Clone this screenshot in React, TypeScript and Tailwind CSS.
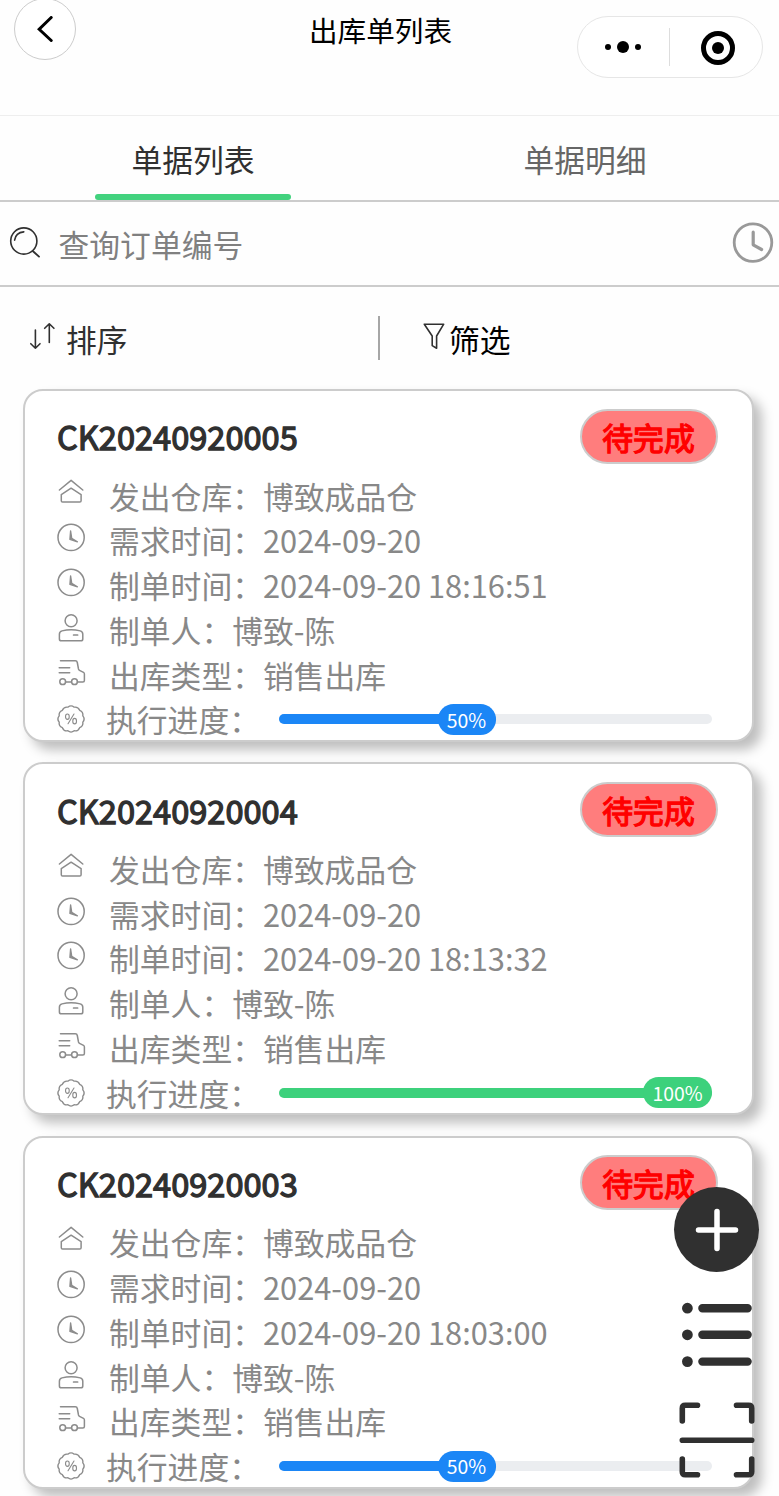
import type { ReactNode } from "react";

type Order = {
  code: string;
  status: string;
  warehouse: string;
  needDate: string;
  createdAt: string;
  creator: string;
  type: string;
  progress: number;
};

const orders: Order[] = [
  { code: "CK20240920005", status: "待完成", warehouse: "博致成品仓", needDate: "2024-09-20", createdAt: "2024-09-20 18:16:51", creator: "博致-陈", type: "销售出库", progress: 50 },
  { code: "CK20240920004", status: "待完成", warehouse: "博致成品仓", needDate: "2024-09-20", createdAt: "2024-09-20 18:13:32", creator: "博致-陈", type: "销售出库", progress: 100 },
  { code: "CK20240920003", status: "待完成", warehouse: "博致成品仓", needDate: "2024-09-20", createdAt: "2024-09-20 18:03:00", creator: "博致-陈", type: "销售出库", progress: 50 },
];

function RowIcon({ children }: { children: ReactNode }) {
  return (
    <svg viewBox="0 0 28 28" className="mb-[2px] h-7 w-7 shrink-0 overflow-visible" fill="none" stroke="#8c8c8c" strokeWidth="1.5" strokeLinecap="round" strokeLinejoin="round">
      {children}
    </svg>
  );
}

function HouseIcon() {
  return (
    <RowIcon>
      <path d="M2.4 11 14.1 1.3 25.8 11" />
      <path d="M4.3 15.6 14.1 9.2l10 6.4v6.2q0 1.3-1.3 1.3H5.6q-1.3 0-1.3-1.3z" />
    </RowIcon>
  );
}

function ClockIcon() {
  return (
    <RowIcon>
      <circle cx="14.1" cy="13.4" r="13.1" />
      <path d="M13.600 6.900 12.900 15.300 20.400 17.800 14.700 14.200z" fill="#8c8c8c" strokeWidth="1.300" />
    </RowIcon>
  );
}

function UserIcon() {
  return (
    <RowIcon>
      <circle cx="14.1" cy="6.7" r="6" />
      <path d="M2.4 20.2q0-2.6 2.6-3.3Q9.4 15.7 14.1 15.7t9.1 1.2q2.6 .7 2.6 3.3v4.7q0 1.9-1.9 1.9H4.3q-1.9 0-1.9-1.9z" />
      <path d="M16.6 21h4" strokeWidth="1.7" />
    </RowIcon>
  );
}

function TruckIcon() {
  return (
    <RowIcon>
      <path d="M3.5 1.800h14.800q1.700 0 2 1.700l1.200 6.500q.2 .9 1 1.300l4 2.100q.9 .5 .9 1.500v6.500q0 1.500-1.500 1.500h-5.600" />
      <path d="M2.200 8.800h10.500M2.200 13.700h10.500M8.500 22.900h5.800" />
      <circle cx="5.700" cy="22.700" r="2.900" />
      <circle cx="17.500" cy="22.700" r="2.900" />
    </RowIcon>
  );
}

function PercentIcon() {
  return (
    <RowIcon>
      <g transform="translate(.9 1.200) scale(.93)">
        <path d="M10.700 3.200q3.400-2.800 6.800 0 4.300-.7 5.900 3.400 4.100 1.600 3.400 5.900 2.800 3.400 0 6.800.7 4.300-3.400 5.900-1.600 4.100-5.900 3.400-3.400 2.800-6.800 0-4.300.7-5.900-3.400-4.100-1.600-3.400-5.900-2.800-3.400 0-6.800-.7-4.300 3.400-5.900 1.600-4.100 5.900-3.400z" />
        <ellipse cx="10.200" cy="13.400" rx="2" ry="2.900" strokeWidth="1.200" />
        <ellipse cx="18" cy="18.200" rx="2" ry="2.900" strokeWidth="1.200" />
        <path d="M17.300 10.600 10.900 21" strokeWidth="1.200" />
      </g>
    </RowIcon>
  );
}

function InfoRow({ icon, label, value }: { icon: ReactNode; label: string; value: string }) {
  return (
    <div className="flex h-[44.8px] items-center">
      {icon}
      <span className="ml-[24px] pt-[3px] whitespace-pre">{label}：{value}</span>
    </div>
  );
}

function Progress({ value }: { value: number }) {
  const done = value >= 100;
  return (
    <div className="mt-[2px] h-[10px] w-[433px] rounded-full bg-[#ebedf0]">
      <div
        className={`flex h-full items-center justify-end rounded-full ${done ? "bg-[#3dd17c]" : "bg-[#1b86f6]"}`}
        style={{ width: `${value}%` }}
      >
        <span
          className={`flex h-[31px] shrink-0 items-center justify-center rounded-full text-[19.4px] leading-none text-white ${done ? "w-[69px] bg-[#3dd17c]" : "w-[58px] bg-[#1b86f6]"}`}
        >
          {value}%
        </span>
      </div>
    </div>
  );
}

function OrderCard({ order }: { order: Order }) {
  return (
    <div className="h-[353px] rounded-[20px] border-2 border-[#ccc] bg-white pt-[17.5px] pl-[32px] shadow-[8px_8px_12px_rgba(0,0,0,0.25)]">
      <div className="flex h-[55px] items-center justify-between pr-[34.5px]">
        <span className="pt-[1px] text-[32.6px] leading-none text-[#303030] [-webkit-text-stroke:1.3px_#303030]">{order.code}</span>
        <span className="flex h-[55px] w-[138px] items-center justify-center rounded-full border-2 border-[#ccc] bg-[#ff7d7d] pt-[2px] text-[30.8px] leading-none text-[#ff0000] [-webkit-text-stroke:1.3px_#ff0000]">
          {order.status}
        </span>
      </div>
      <div className="mt-[8.500px] text-[30.8px] leading-none text-[#888]">
        <InfoRow icon={<HouseIcon />} label="发出仓库" value={order.warehouse} />
        <InfoRow icon={<ClockIcon />} label="需求时间" value={order.needDate} />
        <InfoRow icon={<ClockIcon />} label="制单时间" value={order.createdAt} />
        <InfoRow icon={<UserIcon />} label="制单人" value={order.creator} />
        <InfoRow icon={<TruckIcon />} label="出库类型" value={order.type} />
        <div className="flex h-[44.8px] items-center">
          <PercentIcon />
          <span className="ml-[21px] w-[173px] pt-[3px] whitespace-nowrap">执行进度：</span>
          <Progress value={order.progress} />
        </div>
      </div>
    </div>
  );
}

export default function App() {
  return (
    <div className="relative h-[1496px] w-[779px] overflow-hidden bg-[#fefefe] font-['Noto_Sans_CJK_SC',sans-serif]">
      <header className="flex h-[116px] items-start border-b border-[#eee]">
        <button className="mt-[-2px] ml-[14px] flex h-[62px] w-[62px] items-center justify-center rounded-full border border-[#ccc] bg-white">
          <svg viewBox="0 0 16 26" className="h-[26px] w-4" fill="none" stroke="#000" strokeWidth="3" strokeLinecap="round" strokeLinejoin="miter">
            <path d="M14.2 1.500 2.200 13.300 14.200 24.500" />
          </svg>
        </button>
        <h1 className="mt-[14px] ml-[233px] w-[268px] text-[28.6px] leading-[32px] text-black">出库单列表</h1>
        <div className="mt-[16px] flex h-[62px] w-[186px] shrink-0 items-center rounded-full border border-[#e6e6e6] bg-white">
          <div className="flex h-[38px] w-[92px] items-center justify-center gap-[6px] border-r border-[#ddd] pr-[2px]">
            <span className="h-[6px] w-[6px] rounded-full bg-black" />
            <span className="h-[12px] w-[12px] rounded-full bg-black" />
            <span className="h-[6px] w-[6px] rounded-full bg-black" />
          </div>
          <div className="flex flex-1 items-center justify-center pt-[1px] pl-[3px]">
            <div className="flex h-[34px] w-[34px] items-center justify-center rounded-full border-[5px] border-black">
              <span className="h-[12px] w-[12px] rounded-full bg-black" />
            </div>
          </div>
        </div>
      </header>

      <nav className="flex h-[86px] border-b-2 border-[#ccc] text-[30.8px] leading-none">
        <div className="flex w-[386px] flex-col items-center justify-end text-[#303030]">
          <span className="mb-[19px]">单据列表</span>
          <span className="h-[6px] w-[196px] rounded-full bg-[#42d27e]" />
        </div>
        <div className="flex flex-1 flex-col items-center justify-end pl-[5px] text-[#666]">
          <span className="mb-[25px]">单据明细</span>
        </div>
      </nav>

      <div className="flex h-[84.500px] items-center border-b-2 border-[#ccc]">
        <svg viewBox="0 0 32 32" className="ml-[9px] h-8 w-8" fill="none" stroke="#303030" strokeWidth="1.6" strokeLinecap="round">
          <circle cx="14.800" cy="14" r="13.100" />
          <path d="M24 24.200 30 29.600" strokeWidth="1.900" />
          <path d="M5.600 13.200Q6.600 5.600 14.800 4.900" />
        </svg>
        <span className="ml-[17.5px] flex-1 pt-[2px] text-[30.8px] leading-none text-[#808080]">查询订单编号</span>
        <svg viewBox="0 0 42 42" className="mr-[5px] h-[42px] w-[42px]" fill="none" stroke="#999" strokeWidth="2.800" strokeLinecap="round" strokeLinejoin="round">
          <circle cx="21" cy="20.600" r="18.800" />
          <path d="M21.200 10.200V22.800L29.600 27.500" strokeWidth="3.200" />
        </svg>
      </div>

      <div className="flex h-[102.500px] items-center text-[30.8px] leading-none">
        <div className="flex h-[44px] w-[380px] items-center border-r-2 border-[#a6a6a6] text-[#303030]">
          <svg viewBox="0 0 26 28" className="mb-[4px] ml-[29px] h-7 w-[26px]" fill="none" stroke="#303030" strokeWidth="1.6" strokeLinecap="round" strokeLinejoin="round">
            <path d="M6.400 8v18.200M1.800 21.700l4.600 4.500 4.600-4.500" />
            <path d="M20.300 20.500V2M15.700 6.300l4.600-4.500 4.600 4.500" />
          </svg>
          <span className="ml-[11px] pt-[3px]">排序</span>
        </div>
        <div className="flex items-center text-black">
          <svg viewBox="0 0 22 26" className="mb-[3px] ml-[43px] h-[26px] w-[22px]" fill="none" stroke="#303030" strokeWidth="1.6" strokeLinejoin="round">
            <path d="M1.300 1.200H20.700L13.600 13V25.200L9.200 22.600V13z" />
          </svg>
          <span className="ml-[4px] pt-[3px]">筛选</span>
        </div>
      </div>

      <main className="flex flex-col gap-[20.4px] pr-[25px] pl-[23px]">
        {orders.map((order) => (
          <OrderCard key={order.code} order={order} />
        ))}
      </main>

      {/* floating actions over the list */}
      <div className="absolute top-[1187px] left-[674px] flex w-[85px] flex-col items-center">
        <button className="flex h-[85px] w-[85px] items-center justify-center rounded-full bg-[#303030]">
          <svg viewBox="0 0 44 44" className="h-11 w-11" stroke="#fff" strokeWidth="5.500" strokeLinecap="round">
            <path d="M22 3.500v37M3.500 22h37" />
          </svg>
        </button>
        <svg viewBox="0 0 72 66" className="mt-[30px] h-[66px] w-[72px]" stroke="#303030" strokeWidth="8.400" strokeLinecap="round">
          <path d="M21.400 6.200h45.200M21.400 32.800h45.200M21.400 59.600h45.200" />
          <path d="M6.400 6.200h0M6.400 32.800h0M6.400 59.600h0" strokeWidth="10.800" />
        </svg>
        <svg viewBox="0 0 76 76" className="mt-[34px] h-[76px] w-[76px]" fill="none" stroke="#303030" strokeWidth="5.600" strokeLinecap="round">
          <path d="M3.300 19V6.300q0-3 3-3H18.500M57.500 3.300H69.700q3 0 3 3V19M72.700 57V69.700q0 3-3 3H57.500M18.500 72.700H6.300q-3 0-3-3V57M3.300 38.200h69.400" />
        </svg>
      </div>
    </div>
  );
}
